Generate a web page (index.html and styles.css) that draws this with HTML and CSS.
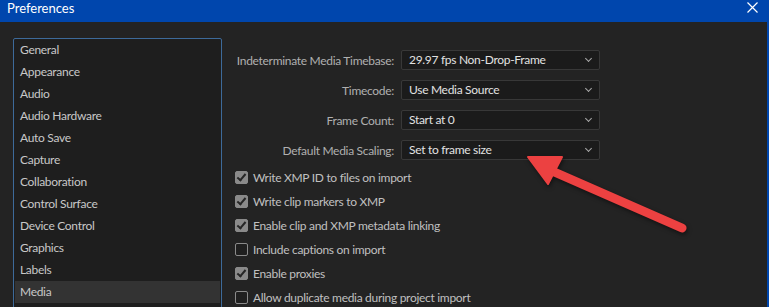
FILE: index.html
```html
<!DOCTYPE html>
<html lang="en">
<head>
  <meta charset="UTF-8" />
  <title>Preferences</title>
  <link rel="stylesheet" href="styles.css">
</head>
<body>
  <div class="window">
    <div class="titlebar">
      <span class="title">Preferences</span>
      <svg class="close" width="11" height="11" viewBox="0 0 11 11">
        <path d="M0.5 0.5 L10.5 10.5 M10.5 0.5 L0.5 10.5" stroke="#fff" stroke-width="1.2" />
      </svg>
    </div>

    <div class="content">
      <ul class="nav">
        <li>General</li>
        <li>Appearance</li>
        <li>Audio</li>
        <li>Audio Hardware</li>
        <li>Auto Save</li>
        <li>Capture</li>
        <li>Collaboration</li>
        <li>Control Surface</li>
        <li>Device Control</li>
        <li>Graphics</li>
        <li>Labels</li>
        <li class="selected">Media</li>
      </ul>

      <div class="panel">
        <div class="form">
          <label>Indeterminate Media Timebase:</label>
          <div class="select">29.97 fps Non-Drop-Frame <span class="chev"></span></div>
          <label>Timecode:</label>
          <div class="select">Use Media Source <span class="chev"></span></div>
          <label>Frame Count:</label>
          <div class="select">Start at 0 <span class="chev"></span></div>
          <label>Default Media Scaling:</label>
          <div class="select">Set to frame size <span class="chev"></span></div>
        </div>

        <div class="checks">
          <div class="check on"><span class="box"></span>Write XMP ID to files on import</div>
          <div class="check on"><span class="box"></span>Write clip markers to XMP</div>
          <div class="check on"><span class="box"></span>Enable clip and XMP metadata linking</div>
          <div class="check"><span class="box"></span>Include captions on import</div>
          <div class="check on"><span class="box"></span>Enable proxies</div>
          <div class="check"><span class="box"></span>Allow duplicate media during project import</div>
        </div>
      </div>
    </div>

    <!-- annotation arrow -->
    <svg class="arrow" width="769" height="307" viewBox="0 0 769 307">
      <g fill="#ec4141" stroke="#ec4141">
        <line x1="552" y1="171" x2="682" y2="228" stroke-width="9" stroke-linecap="round" />
        <polygon points="528,157 562,157 548,184" stroke-width="2" stroke-linejoin="round" />
      </g>
    </svg>
  </div>
</body>
</html>
```

FILE: styles.css
```css
body {
  margin: 0;
  padding: 0;
  background: #232323;
  font-family: Lato, "Open Sans", sans-serif;
  font-size: 12px;
  letter-spacing: -0.3px;
}

.window {
  position: relative;
  width: 767px;
  height: 307px;
  overflow: hidden;
  border-right: 2px solid #0046ad;
  background: #232323;
}

.titlebar {
  height: 22px;
  background: #0046ad;
  display: flex;
  align-items: center;
  justify-content: space-between;
  padding: 0 9px 0 7px;
  color: #fff;
}

.title {
  font-size: 13px;
  letter-spacing: 0;
  margin-top: -6px;
}

.close {
  margin-top: -7px;
}

.content {
  display: flex;
  padding: 16px 0 0 13px;
}

.nav {
  list-style: none;
  margin: 0;
  padding: 0;
  width: 207px;
  height: 300px;
  border: 1px solid #3d6a9a;
  border-radius: 2px;
  background: #1e1e1e;
  flex-shrink: 0;
}

.nav li {
  height: 22px;
  line-height: 22px;
  padding-left: 5px;
  margin: 0 1px;
  color: #c8c8c8;
}

.nav li.selected {
  background: #333333;
}

.panel {
  padding: 12px 0 0 13px;
}

.form {
  display: grid;
  grid-template-columns: 159px 199px;
  column-gap: 7px;
  row-gap: 10px;
  align-items: center;
}

.form label {
  text-align: right;
  white-space: nowrap;
  color: #b0b0b0;
}

.select {
  position: relative;
  height: 18px;
  line-height: 18px;
  padding-left: 7px;
  background: #1b1b1b;
  border: 1px solid #383838;
  border-radius: 2px;
  color: #e2e2e2;
}

.chev {
  position: absolute;
  right: 8px;
  top: 5px;
  width: 4px;
  height: 4px;
  border-right: 1px solid #a8a8a8;
  border-bottom: 1px solid #a8a8a8;
  transform: rotate(45deg);
}

.checks {
  margin-top: 5px;
}

.check {
  display: flex;
  align-items: center;
  height: 24px;
  white-space: nowrap;
  color: #c0c0c0;
}

.box {
  position: relative;
  width: 11px;
  height: 11px;
  border: 1.5px solid #8a8a8a;
  border-radius: 2px;
  margin-right: 5px;
  background: #1f1f1f;
}

.check.on .box {
  background: #8a8a8a;
}

.check.on .box::after {
  content: "";
  position: absolute;
  left: 3px;
  top: 0px;
  width: 3px;
  height: 7px;
  border-right: 2px solid #262626;
  border-bottom: 2px solid #262626;
  transform: rotate(40deg);
}

.arrow {
  position: absolute;
  left: 0;
  top: 0;
  pointer-events: none;
  filter: drop-shadow(1px 2px 2px rgba(0, 0, 0, 0.5));
}
```
